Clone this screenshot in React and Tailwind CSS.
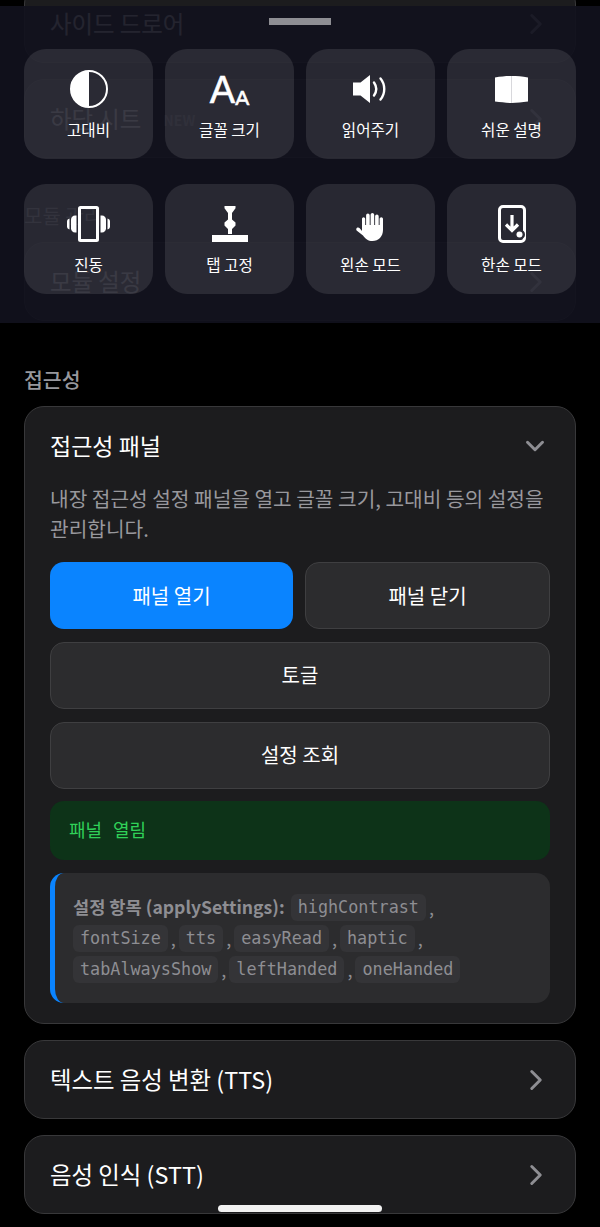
import { ChevronRight, ChevronDown } from "lucide-react";

const sans = { fontFamily: '"Noto Sans CJK KR", "Noto Sans", sans-serif' };

function ContrastIcon() {
    return (
        <svg width="40" height="40" viewBox="0 0 40 40">
            <circle cx="20" cy="20" r="18" fill="none" stroke="#fff" strokeWidth="2" />
            <path d="M20 2a18 18 0 0 0 0 36z" fill="#fff" />
        </svg>
    );
}

function FontSizeIcon() {
    return (
        <div className="mt-[2px] flex items-end leading-none text-white [-webkit-text-stroke:0.6px_white]" style={{ fontFamily: '"Liberation Sans", sans-serif' }}>
            <span className="text-[38px] leading-[39px]">A</span>
            <span className="text-[21px] leading-[24px]">A</span>
        </div>
    );
}

function SpeakerIcon() {
    return (
        <svg width="35" height="28" viewBox="0 0 35 28" fill="none">
            <path d="M0 7.500h7.500L17 0v28l-9.500-7.500H0z" fill="#fff" />
            <path d="M21 7.500c2.800 4 2.800 9 0 13" stroke="#fff" strokeWidth="2.400" strokeLinecap="round" />
            <path d="M27.500 3.500c5 6 5 15 0 21" stroke="#fff" strokeWidth="2.400" strokeLinecap="round" />
        </svg>
    );
}

function BookIcon() {
    return (
        <svg width="33" height="27" viewBox="0 0 33 27">
            <path d="M0 1.500C6 .4 11 0 16.500 0S27 .4 33 1.500v24C27 26 22 27 16.500 27S6 26 0 25.500z" fill="#fff" />
            <path d="M16.500 0v27" stroke="#d8d8dc" strokeWidth="1" />
        </svg>
    );
}

function VibrateIcon() {
    return (
        <svg width="43" height="36" viewBox="0 0 43 36" fill="none">
            <rect x="12.500" y="1.500" width="18" height="33" rx="1" stroke="#fff" strokeWidth="3" />
            <path d="M9.500 9.500H8c-2.200 0-4 1.800-4 4v9c0 2.200 1.800 4 4 4h1.500z" fill="#fff" />
            <path d="M33.500 9.500H35c2.200 0 4 1.800 4 4v9c0 2.200-1.800 4-4 4h-1.500z" fill="#fff" />
            <path d="M2.500 12.500C1 12.800 0 14 0 15.500v5c0 1.500 1 2.700 2.500 3z" fill="#fff" />
            <path d="M40.500 12.500c1.500.3 2.500 1.500 2.500 3v5c0 1.500-1 2.700-2.500 3z" fill="#fff" />
        </svg>
    );
}

function PinIcon() {
    return (
        <svg width="36" height="36" viewBox="0 0 36 36">
            <path d="M12.500 0h11v2.200L20 7v6.500l3.500 3v3L20 23v5h-4v-5l-3.500-3.500v-3l3.500-3V7l-3.500-4.800z" fill="#fff" />
            <rect x="0" y="29" width="36" height="7" fill="#fff" />
        </svg>
    );
}

function HandIcon() {
    return (
        <svg width="29" height="28" viewBox="0 0 29 28" className="mt-[6px]">
            <path
                d="M6 6c0-1 .8-1.700 1.600-1.700S9.200 5 9.200 6v6h.9V2.500C10.100 1.400 11 .6 11.900.6s1.800.8 1.800 1.900V12h.9V1.900C14.600.8 15.500 0 16.400 0s1.800.8 1.800 1.900V12h.9V3.500c0-1.100.9-1.900 1.800-1.900s1.800.8 1.800 1.900V12h.9V6c0-1 .8-1.800 1.700-1.800s1.700.8 1.700 1.800v11c0 6.500-4.500 11-10.500 11-4.500 0-7-2-9.500-5.500L.6 17.500c-.7-1-.4-2.100.4-2.700.9-.6 2-.4 2.700.5L6 18z"
                fill="#fff"
            />
        </svg>
    );
}

function OneHandIcon() {
    return (
        <svg width="28" height="38" viewBox="0 0 28 38" fill="none">
            <rect x="1.500" y="1.500" width="25" height="35" rx="3.500" stroke="#fff" strokeWidth="3" />
            <path d="M14 10v15.500M8 19.500l6 6 6-6" stroke="#fff" strokeWidth="3.200" />
            <circle cx="22" cy="29.500" r="5" fill="#2b2b35" />
            <circle cx="21.500" cy="29.500" r="3" fill="#fff" />
        </svg>
    );
}

const tiles = [
    { label: "고대비", icon: ContrastIcon },
    { label: "글꼴 크기", icon: FontSizeIcon },
    { label: "읽어주기", icon: SpeakerIcon },
    { label: "쉬운 설명", icon: BookIcon },
    { label: "진동", icon: VibrateIcon },
    { label: "탭 고정", icon: PinIcon },
    { label: "왼손 모드", icon: HandIcon },
    { label: "한손 모드", icon: OneHandIcon },
];

const codes = [
    ["highContrast"],
    ["fontSize", "tts", "easyRead", "haptic"],
    ["tabAlwaysShow", "leftHanded", "oneHanded"],
];

function RowCard({ title, badge }) {
    return (
        <div className="h-[79px] px-[25px] flex items-center justify-between rounded-[20px] border border-[#38383a] bg-[#1c1c1e]">
            <div className="flex items-center gap-[22px]">
                <span className="text-[23.4px] text-white">{title}</span>
                {badge && <span className="mt-[5px] text-[14px] font-bold text-white/40">{badge}</span>}
            </div>
            <ChevronRight className="size-[34px] -mr-[3px] text-[#8e8e93]" strokeWidth={2.1} />
        </div>
    );
}

function ActionButton({ children, primary, wide }) {
    return (
        <button
            className={`h-[67px] rounded-[14px] text-[20px] text-white ${wide ? "w-full shrink-0" : "flex-1"} ${
                primary ? "bg-[#0a84ff]" : "border border-[#3f3f41] bg-[#2c2c2e]"
            }`}
        >
            {children}
        </button>
    );
}

function Code({ children }) {
    return (
        <code className="rounded-[6px] bg-[#343437] px-[7px] py-[1px] text-[16.8px] text-[#8e8e93]" style={{ fontFamily: '"DejaVu Sans Mono", monospace' }}>
            {children}
        </code>
    );
}

export default function App() {
    return (
        <div className="relative h-[1227px] w-[600px] overflow-hidden bg-black" style={sans}>
            {/* Page behind the sheet, scrolled up */}
            <div className="-mt-[16px] flex flex-col px-[24px]">
                <RowCard title="사이드 드로어" />
                <div className="mt-[16px]">
                    <RowCard title="하단 시트" badge="NEW" />
                </div>
                <div className="mt-[45px] h-[26px] text-[20px] leading-[26px] text-[#98989d]">모듈 관리</div>
                <div className="mt-[13px]">
                    <RowCard title="모듈 설정" />
                </div>

                <div className="mt-[45px] h-[26px] text-[20.5px] leading-[26px] font-medium text-[#98989d]">접근성</div>

                <div className="mt-[14px] h-[618px] rounded-[20px] border border-[#38383a] bg-[#1c1c1e] px-[25px]">
                    <div className="flex h-[77px] items-center justify-between">
                        <span className="text-[23px] text-white">접근성 패널</span>
                        <ChevronDown className="size-[30px] text-[#8e8e93]" strokeWidth={2.4} />
                    </div>
                    <p className="text-[20.25px] leading-[30px] text-[#98989d]">
                        내장 접근성 설정 패널을 열고 글꼴 크기, 고대비 등의 설정을 관리합니다.
                    </p>
                    <div className="mt-[18px] flex flex-col gap-[12.8px]">
                        <div className="flex gap-[12px]">
                            <ActionButton primary>패널 열기</ActionButton>
                            <ActionButton>패널 닫기</ActionButton>
                        </div>
                        <ActionButton wide>토글</ActionButton>
                        <ActionButton wide>설정 조회</ActionButton>
                        <div className="flex h-[59px] items-center rounded-[14px] bg-[#0d3318] px-[19px] text-[18px] text-[#30d158]" style={{ fontFamily: '"DejaVu Sans Mono", "Noto Sans CJK KR", monospace' }}>
                            패널 열림
                        </div>
                        <div className="rounded-[14px] border-l-[5px] border-[#0a84ff] bg-[#2c2c2e] py-[18.5px] pl-[18px] pr-[16px]">
                            {codes.map((line, i) => (
                                <div key={i} className="flex h-[31px] items-center whitespace-nowrap text-[18px] text-[#8e8e93]">
                                    {i === 0 && <b className="mr-[6px] text-[17.6px] font-semibold">설정 항목 (applySettings):</b>}
                                    {line.map((code, j) => (
                                        <span key={code} className="flex items-center">
                                            <Code>{code}</Code>
                                            {(j < line.length - 1 || i < codes.length - 1) && <span className="px-[3px]">,</span>}
                                        </span>
                                    ))}
                                </div>
                            ))}
                        </div>
                    </div>
                </div>

                <div className="mt-[16px]">
                    <RowCard title="텍스트 음성 변환 (TTS)" />
                </div>
                <div className="mt-[16px]">
                    <RowCard title="음성 인식 (STT)" />
                </div>
            </div>

            {/* Accessibility bottom sheet overlay */}
            <div className="absolute left-0 right-0 top-[6px] h-[317px] bg-[#11111d]/92 px-[24px]">
                <div className="mx-auto mt-[12px] h-[7px] w-[62px] bg-[#8e8e93]" />
                <div className="mt-[24px] grid grid-cols-4 gap-x-[12px] gap-y-[25px]">
                    {tiles.map(({ label, icon: Icon }) => (
                        <div key={label} className="flex h-[110px] flex-col items-center rounded-[22px] bg-white/10 pt-[20px]">
                            <div className="flex h-[40px] items-center justify-center">
                                <Icon />
                            </div>
                            <span className="mt-[9px] text-[15.6px] leading-[22px] text-white">{label}</span>
                        </div>
                    ))}
                </div>
            </div>

            {/* Home indicator */}
            <div className="absolute bottom-[15px] left-[218px] h-[7px] w-[164px] rounded-full bg-[#f2f2f2]" />
        </div>
    );
}
